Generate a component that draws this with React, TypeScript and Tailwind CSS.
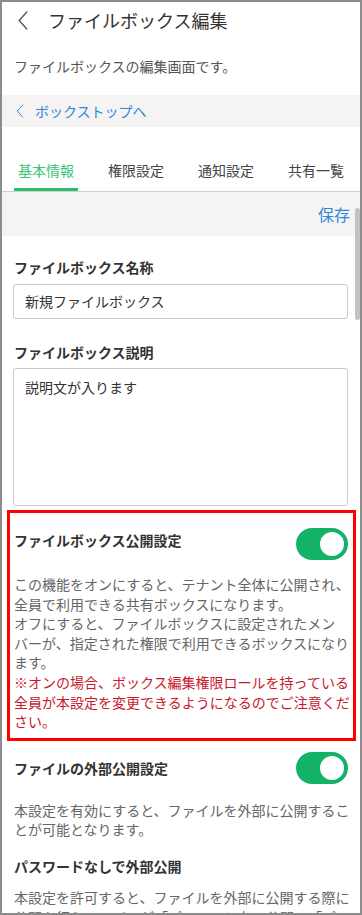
import React from "react";

const font = { fontFamily: '"Noto Sans CJK JP", "Noto Sans", sans-serif' };

function Toggle() {
  return (
    <div className="mr-[2px] flex h-[32px] w-[52px] shrink-0 items-center justify-end rounded-full bg-[#14b267] pr-[4px]">
      <div className="h-[24px] w-[24px] rounded-full bg-white" />
    </div>
  );
}

function Chevron({ className, stroke }: { className: string; stroke: string }) {
  return (
    <svg className={className} viewBox="0 0 12 20" fill="none">
      <polyline points="10,1 2,10 10,19" stroke={stroke} strokeWidth="1.4" strokeLinejoin="round" strokeLinecap="round" />
    </svg>
  );
}

const tabs = ["基本情報", "権限設定", "通知設定", "共有一覧"];

export default function App() {
  return (
    <div
      lang="ja"
      style={font}
      className="relative h-[915px] w-[362px] overflow-hidden border-2 border-[#8c8c8c] bg-white text-[#333] [line-break:strict]"
    >
      {/* header */}
      <div className="flex h-[36px] items-center pl-[15px]">
        <Chevron className="h-[19px] w-[12px]" stroke="#555" />
        <h1 className="ml-[19px] text-[18px] leading-[24px] text-[#333]">ファイルボックス編集</h1>
      </div>
      <p className="mt-[18px] pl-[12px] text-[14px] leading-[20px] text-[#555]">ファイルボックスの編集画面です。</p>

      {/* back link */}
      <div className="mt-[19px] flex h-[32px] items-center bg-[#f5f4f3] pl-[14px] text-[14px] text-[#2b88dc]">
        <Chevron className="h-[14px] w-[8px]" stroke="#2b88dc" />
        <span className="ml-[11px] leading-[20px]">ボックストップへ</span>
      </div>

      {/* tabs */}
      <div className="mt-[24px] flex border-b border-[#cfcfcf] pl-[12px]">
        {tabs.map((t, i) => (
          <div
            key={t}
            className={
              i === 0
                ? "mr-[26px] shrink-0 whitespace-nowrap border-b-[3px] border-[#2dbe6c] px-[4px] pt-[9px] pb-[8px] text-[14px] leading-[20px] text-[#3cc27a]"
                : "mr-[26px] shrink-0 whitespace-nowrap border-b-[3px] border-transparent px-[4px] pt-[9px] pb-[8px] text-[14px] leading-[20px] text-[#444]"
            }
          >
            {t}
          </div>
        ))}
      </div>

      {/* save bar */}
      <div className="flex h-[44px] items-center justify-end bg-[#f5f4f3] pr-[10px]">
        <span className="text-[16px] leading-[22px] text-[#2b88dc]">保存</span>
      </div>

      {/* form */}
      <div className="pl-[12px] pr-[10px]">
        <div className="pt-[21px] text-[14px] font-bold leading-[20px] text-[#333]">ファイルボックス名称</div>
        <div className="mt-[7px] mr-[2px] -ml-px flex h-[35px] items-center rounded-[3px] border border-[#cacaca] px-[11px] text-[14px] text-[#333]">
          新規ファイルボックス
        </div>

        <div className="mt-[23px] text-[14px] font-bold leading-[20px] text-[#333]">ファイルボックス説明</div>
        <div className="mt-[6px] mr-[2px] -ml-px h-[138px] rounded-[3px] border border-[#cacaca] px-[11px] pt-[8px] text-[14px] leading-[20px] text-[#333]">
          説明文が入ります
        </div>
      </div>

      {/* highlighted section */}
      <div className="mt-[4px] ml-[5px] mr-[4px] border-[3px] border-[#ff0000] pb-[6px] pl-[4px] pr-[3px]">
        <div className="flex items-start justify-between pt-[15px]">
          <div className="mt-[2px] text-[14px] font-bold leading-[20px] text-[#333]">ファイルボックス公開設定</div>
          <Toggle />
        </div>
        <p className="mt-[15px] text-[14px] leading-[19.6px] text-[#666]">
          この機能をオンにすると、テナント全体に公開され、全員で利用できる共有ボックスになります。
          <br />
          オフにすると、ファイルボックスに設定されたメンバーが、指定された権限で利用できるボックスになります。
          <br />
          <span className="text-[#c9172b]">
            ※オンの場合、ボックス編集権限ロールを持っている全員が本設定を変更できるようになるのでご注意ください。
          </span>
        </p>
      </div>

      {/* external sharing */}
      <div className="pl-[12px] pr-[10px]">
        <div className="flex items-start justify-between pt-[11px]">
          <div className="mt-[6px] text-[14px] font-bold leading-[20px] text-[#333]">ファイルの外部公開設定</div>
          <Toggle />
        </div>
        <p className="mt-[17px] text-[14px] leading-[19.6px] text-[#666]">
          本設定を有効にすると、ファイルを外部に公開することが可能となります。
        </p>

        <div className="mt-[16px] text-[14px] font-bold leading-[20px] text-[#333]">パスワードなしで外部公開</div>
        <p className="mt-[12px] text-[14px] leading-[19.6px] text-[#666]">
          本設定を許可すると、ファイルを外部に公開する際に公開を行うメンバーが「パスワード有で公開」・「パスワード無で公開」を選択できるようになります。
        </p>
      </div>

      {/* scrollbar */}
      <div className="absolute top-[206px] right-0 h-[112px] w-[5px] rounded-full bg-[#c2c2c2]" />
    </div>
  );
}
